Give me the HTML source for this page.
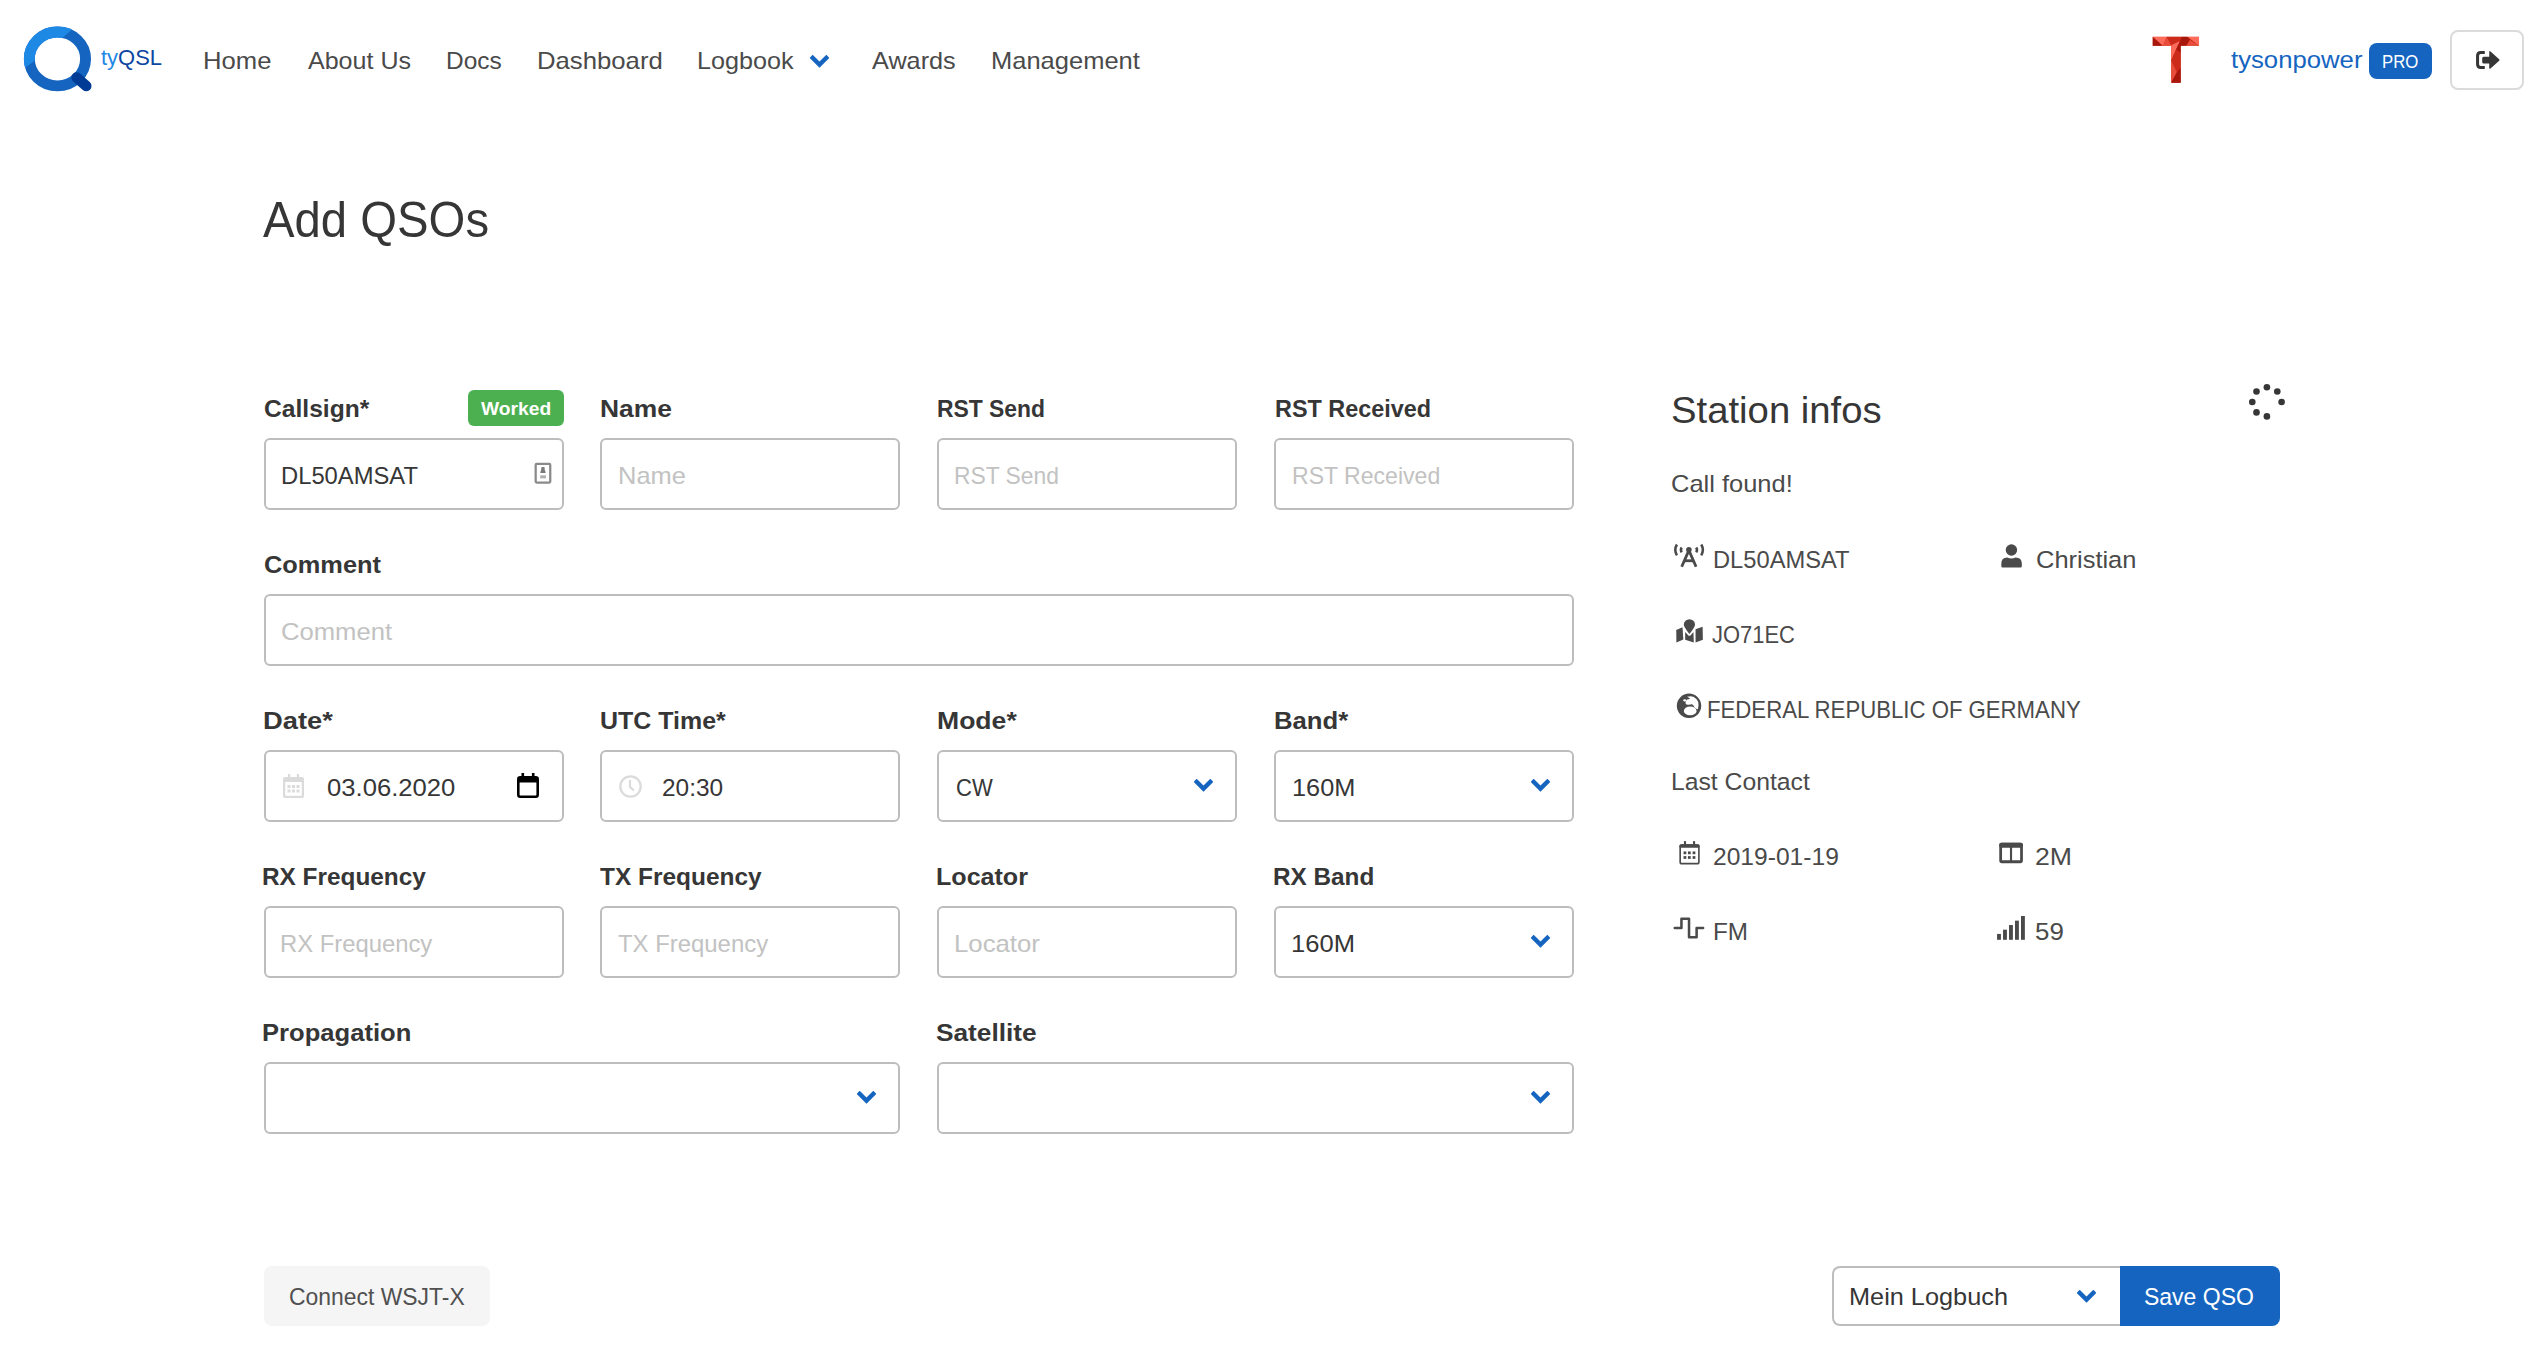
<!DOCTYPE html>
<html><head><meta charset="utf-8"><title>Add QSOs</title>
<style>
html,body{margin:0;padding:0;background:#fff;width:2536px;height:1353px;overflow:hidden;position:relative}
body{font-family:"Liberation Sans",sans-serif}
.b{position:absolute;box-sizing:border-box}
.i{position:absolute;display:block}
.t{position:absolute;white-space:pre;transform-origin:0 0}
</style></head><body>
<svg class="i" style="left:20px;top:22px" width="76" height="74" viewBox="0 0 1390 1353"><defs><clipPath id="lc"><polygon points="1225,-110 572,475 532,530 -255,1070 -255,-110"/></clipPath></defs><ellipse cx="685" cy="675" rx="514" ry="493" fill="none" stroke="#1565c0" stroke-width="200"/><ellipse cx="685" cy="675" rx="514" ry="493" fill="none" stroke="#1e88e5" stroke-width="200" clip-path="url(#lc)"/><line x1="1035" y1="1016" x2="1212" y2="1170" stroke="#003c96" stroke-width="192" stroke-linecap="round"/></svg>
<svg class="i" style="left:810px;top:55.2px" width="19" height="13" viewBox="0 0 19 13"><polyline points="1.15,1.25 9.5,9.6 17.85,1.25" fill="none" stroke="#1565c0" stroke-width="4.3" stroke-linecap="butt" stroke-linejoin="miter"/></svg>
<svg class="i" style="left:2145px;top:30px" width="60" height="60" viewBox="0 0 1353 1353"><rect x="175" y="155" width="1043" height="200" fill="#cc2a1a"/><rect x="592" y="300" width="213" height="890" fill="#cc2a1a"/><polygon points="175,155 175,355 405,355" fill="#a8170c"/><polygon points="175,155 490,155 405,355" fill="#ff6b5b"/><polygon points="490,155 405,355 600,355" fill="#e84c3a"/><polygon points="490,155 835,155 790,250 600,345" fill="#cc2a1a"/><polygon points="835,155 960,155 1010,225 935,355 790,355 790,250" fill="#a8170c"/><polygon points="960,155 1218,155 1218,355" fill="#ff6b5b"/><polygon points="1010,225 1218,355 935,355" fill="#e84c3a"/><polygon points="590,345 790,250 700,440 590,690" fill="#ff6b5b"/><polygon points="790,250 805,355 805,520 700,440" fill="#a8170c"/><polygon points="700,440 805,520 805,850 720,950 590,690" fill="#cc2a1a"/><polygon points="590,690 720,950 590,1190" fill="#e84c3a"/><polygon points="720,950 805,850 805,1190 590,1190" fill="#a8170c"/></svg>
<div class="b" style="left:2369px;top:43px;width:63px;height:36px;background:#1565c0;border-radius:8px"></div>
<div class="b" style="left:2450px;top:30px;width:74px;height:60px;border:2px solid #dbdbdb;border-radius:8px;background:#fff"></div>
<svg class="i" style="left:2446px;top:26px" width="84" height="68" viewBox="0 0 1671 1353"><path d="M772,497 H690 Q598,497 598,590 V760 Q598,855 690,855 H772 V795 H690 Q658,795 658,760 V590 Q658,557 690,557 H772 Z" fill="#363636"/><path d="M720,640 Q720,610 750,610 H860 V515 Q860,490 885,505 L1058,660 Q1075,675 1058,690 L885,845 Q860,860 860,835 V745 H750 Q720,745 720,715 Z" fill="#363636"/></svg>
<div class="b" style="left:264px;top:438px;width:300px;height:72px;border:2px solid #bdbdbd;border-radius:6px"></div>
<div class="b" style="left:600px;top:438px;width:300px;height:72px;border:2px solid #bdbdbd;border-radius:6px"></div>
<div class="b" style="left:937px;top:438px;width:300px;height:72px;border:2px solid #bdbdbd;border-radius:6px"></div>
<div class="b" style="left:1274px;top:438px;width:300px;height:72px;border:2px solid #bdbdbd;border-radius:6px"></div>
<div class="b" style="left:264px;top:594px;width:1310px;height:72px;border:2px solid #bdbdbd;border-radius:6px"></div>
<div class="b" style="left:264px;top:750px;width:300px;height:72px;border:2px solid #bdbdbd;border-radius:6px"></div>
<div class="b" style="left:600px;top:750px;width:300px;height:72px;border:2px solid #bdbdbd;border-radius:6px"></div>
<div class="b" style="left:937px;top:750px;width:300px;height:72px;border:2px solid #bdbdbd;border-radius:6px"></div>
<div class="b" style="left:1274px;top:750px;width:300px;height:72px;border:2px solid #bdbdbd;border-radius:6px"></div>
<div class="b" style="left:264px;top:906px;width:300px;height:72px;border:2px solid #bdbdbd;border-radius:6px"></div>
<div class="b" style="left:600px;top:906px;width:300px;height:72px;border:2px solid #bdbdbd;border-radius:6px"></div>
<div class="b" style="left:937px;top:906px;width:300px;height:72px;border:2px solid #bdbdbd;border-radius:6px"></div>
<div class="b" style="left:1274px;top:906px;width:300px;height:72px;border:2px solid #bdbdbd;border-radius:6px"></div>
<div class="b" style="left:264px;top:1062px;width:636px;height:72px;border:2px solid #bdbdbd;border-radius:6px"></div>
<div class="b" style="left:937px;top:1062px;width:637px;height:72px;border:2px solid #bdbdbd;border-radius:6px"></div>
<div class="b" style="left:468px;top:390px;width:96px;height:36px;background:#4caf50;border-radius:6px"></div>
<svg class="i" style="left:1194px;top:778.5px" width="19" height="13" viewBox="0 0 19 13"><polyline points="1.15,1.25 9.5,9.6 17.85,1.25" fill="none" stroke="#1565c0" stroke-width="4.3" stroke-linecap="butt" stroke-linejoin="miter"/></svg>
<svg class="i" style="left:1531px;top:778.5px" width="19" height="13" viewBox="0 0 19 13"><polyline points="1.15,1.25 9.5,9.6 17.85,1.25" fill="none" stroke="#1565c0" stroke-width="4.3" stroke-linecap="butt" stroke-linejoin="miter"/></svg>
<svg class="i" style="left:1531px;top:934.5px" width="19" height="13" viewBox="0 0 19 13"><polyline points="1.15,1.25 9.5,9.6 17.85,1.25" fill="none" stroke="#1565c0" stroke-width="4.3" stroke-linecap="butt" stroke-linejoin="miter"/></svg>
<svg class="i" style="left:857px;top:1090.5px" width="19" height="13" viewBox="0 0 19 13"><polyline points="1.15,1.25 9.5,9.6 17.85,1.25" fill="none" stroke="#1565c0" stroke-width="4.3" stroke-linecap="butt" stroke-linejoin="miter"/></svg>
<svg class="i" style="left:1531px;top:1090.5px" width="19" height="13" viewBox="0 0 19 13"><polyline points="1.15,1.25 9.5,9.6 17.85,1.25" fill="none" stroke="#1565c0" stroke-width="4.3" stroke-linecap="butt" stroke-linejoin="miter"/></svg>
<svg class="i" style="left:526px;top:456px" width="34" height="34" viewBox="0 0 1353 1353"><rect x="385" y="315" width="580" height="740" rx="40" fill="none" stroke="#8a8a8a" stroke-width="90"/><path d="M610,450 Q675,420 740,450 L745,560 Q790,640 780,680 H570 Q560,640 605,560 Z" fill="#7a7a7a"/><rect x="565" y="770" width="230" height="120" fill="#b0b0b0"/></svg>
<svg class="i" style="left:283px;top:774px" width="21" height="24" viewBox="0 0 21 24"><rect x="0" y="3" width="21" height="21" rx="2" fill="#dbdbdb"/><rect x="5" y="0" width="2.2" height="4" fill="#dbdbdb"/><rect x="13.8" y="0" width="2.2" height="4" fill="#dbdbdb"/><rect x="2.2" y="8" width="16.6" height="13.8" fill="#fff"/><g fill="#dbdbdb"><rect x="4.5" y="11" width="3" height="3"/><rect x="9" y="11" width="3" height="3"/><rect x="13.5" y="11" width="3" height="3"/><rect x="4.5" y="15.5" width="3" height="3"/><rect x="9" y="15.5" width="3" height="3"/><rect x="13.5" y="15.5" width="3" height="3"/></g></svg>
<svg class="i" style="left:516.5px;top:772.5px" width="22" height="25" viewBox="0 0 22 25"><rect x="1.3" y="4.3" width="19.4" height="19.4" rx="2" fill="none" stroke="#000" stroke-width="2.6"/><rect x="1" y="4" width="20" height="5.5" fill="#000"/><rect x="4.5" y="0" width="2.6" height="5" fill="#000"/><rect x="14.9" y="0" width="2.6" height="5" fill="#000"/></svg>
<svg class="i" style="left:618.5px;top:774.5px" width="23" height="23" viewBox="0 0 23 23"><circle cx="11.5" cy="11.5" r="10.2" fill="none" stroke="#dbdbdb" stroke-width="2.3"/><polyline points="11,5 11,12 15,15.5" fill="none" stroke="#dbdbdb" stroke-width="2.2"/></svg>
<svg class="i" style="left:2240px;top:375px" width="50" height="50" viewBox="0 0 50 50"><circle cx="26.90" cy="12.30" r="3.3" fill="#363636"/><circle cx="37.30" cy="16.50" r="3.3" fill="#363636"/><circle cx="41.60" cy="27.00" r="3.3" fill="#363636"/><circle cx="16.50" cy="16.50" r="3.3" fill="#363636"/><circle cx="12.30" cy="27.00" r="3.3" fill="#363636"/><circle cx="16.50" cy="37.40" r="3.3" fill="#363636"/><circle cx="26.90" cy="41.40" r="3.3" fill="#363636"/></svg>
<svg class="i" style="left:1668px;top:538px" width="44" height="36" viewBox="0 0 1654 1353"><g fill="none" stroke="#4a4a4a" stroke-width="95"><path d="M335,245 Q215,445 335,650"/><path d="M1250,245 Q1370,445 1250,650"/><path d="M515,355 Q455,445 515,540"/><path d="M1060,355 Q1120,445 1060,540"/></g><circle cx="785" cy="445" r="105" fill="#4a4a4a"/><g stroke="#4a4a4a" stroke-width="105" fill="none"><line x1="760" y1="520" x2="515" y2="1080"/><line x1="810" y1="520" x2="1055" y2="1080"/><line x1="620" y1="855" x2="950" y2="855"/></g></svg>
<svg class="i" style="left:1994px;top:538px" width="36" height="36" viewBox="0 0 1353 1353"><circle cx="655" cy="450" r="215" fill="#4a4a4a"/><path d="M275,1060 V960 Q275,730 500,730 Q580,770 655,770 Q730,770 810,730 Q1045,730 1045,960 V1060 Q1045,1110 995,1110 H325 Q275,1110 275,1060 Z" fill="#4a4a4a"/></svg>
<svg class="i" style="left:1670px;top:612px" width="40" height="36" viewBox="0 0 1503 1353"><g fill="#4a4a4a"><polygon points="235,680 470,570 500,1030 240,1150"/><polygon points="570,750 700,890 760,890 880,750 895,1150 570,1040"/><polygon points="960,650 1225,555 1235,1040 960,1150"/><path d="M730,270 A210,210 0 0 1 940,480 Q940,560 730,830 Q520,560 520,480 A210,210 0 0 1 730,270 Z"/></g></svg>
<svg class="i" style="left:1670px;top:688px" width="36" height="36" viewBox="0 0 1353 1353"><circle cx="715" cy="670" r="430" fill="#4a4a4a"/><path d="M640,330 Q760,290 880,330 Q1000,390 1060,520 Q1090,640 1050,800 Q980,780 930,740 Q900,660 830,610 Q760,610 700,630 Q600,640 580,560 Q600,460 640,430 Q700,420 760,390 Z" fill="#fff"/><ellipse cx="760" cy="860" rx="240" ry="165" fill="#fff"/><ellipse cx="555" cy="465" rx="55" ry="45" fill="#fff"/><circle cx="715" cy="670" r="430" fill="none" stroke="#4a4a4a" stroke-width="60"/></svg>
<svg class="i" style="left:1674px;top:836px" width="32" height="34" viewBox="0 0 1273 1353"><rect x="245" y="360" width="745" height="740" rx="70" fill="none" stroke="#4a4a4a" stroke-width="65"/><rect x="215" y="330" width="805" height="140" rx="60" fill="#4a4a4a"/><rect x="395" y="205" width="85" height="140" fill="#4a4a4a"/><rect x="755" y="205" width="85" height="140" fill="#4a4a4a"/><g fill="#4a4a4a"><rect x="380" y="615" width="110" height="110"/><rect x="555" y="615" width="110" height="110"/><rect x="740" y="615" width="110" height="110"/><rect x="380" y="800" width="110" height="110"/><rect x="555" y="800" width="110" height="110"/><rect x="740" y="800" width="110" height="110"/></g></svg>
<svg class="i" style="left:1994px;top:836px" width="36" height="34" viewBox="0 0 1433 1353"><rect x="265" y="325" width="830" height="700" rx="50" fill="none" stroke="#4a4a4a" stroke-width="110"/><rect x="210" y="270" width="940" height="200" rx="70" fill="#4a4a4a"/><rect x="635" y="400" width="85" height="640" fill="#4a4a4a"/></svg>
<svg class="i" style="left:1668px;top:910px" width="42" height="36" viewBox="0 0 1578 1353"><polyline points="255,675 505,675 505,330 790,330 790,1025 1075,1025 1075,675 1320,675" fill="none" stroke="#4a4a4a" stroke-width="95" stroke-linecap="round" stroke-linejoin="round"/></svg>
<svg class="i" style="left:1992px;top:910px" width="38" height="36" viewBox="0 0 1428 1353"><g fill="#4a4a4a"><rect x="190" y="900" width="145" height="220"/><rect x="415" y="740" width="145" height="380"/><rect x="640" y="565" width="145" height="555"/><rect x="865" y="400" width="145" height="720"/><rect x="1090" y="225" width="145" height="895"/></g></svg>
<div class="b" style="left:264px;top:1266px;width:226px;height:60px;background:#f5f5f5;border-radius:8px"></div>
<div class="b" style="left:1832px;top:1266px;width:290px;height:60px;border:2px solid #bdbdbd;border-right:none;border-radius:8px 0 0 8px"></div>
<svg class="i" style="left:2077px;top:1290px" width="19" height="13" viewBox="0 0 19 13"><polyline points="1.15,1.25 9.5,9.6 17.85,1.25" fill="none" stroke="#1565c0" stroke-width="4.3" stroke-linecap="butt" stroke-linejoin="miter"/></svg>
<div class="b" style="left:2120px;top:1266px;width:160px;height:60px;background:#1565c0;border-radius:0 8px 8px 0"></div>
<div class="t" style="left:100.61px;top:48px;font-size:21.5px;line-height:21.5px;font-weight:400;color:#0d47a1;transform:scaleX(1.0209);"><span style="color:#1e88e5">ty</span><span style="color:#0d47a1">QSL</span></div>
<div class="t" style="left:203.49px;top:49px;font-size:24px;line-height:24px;font-weight:400;color:#4a4a4a;transform:scaleX(1.0686);">Home</div>
<div class="t" style="left:307.67px;top:49px;font-size:24px;line-height:24px;font-weight:400;color:#4a4a4a;transform:scaleX(1.0431);">About Us</div>
<div class="t" style="left:445.58px;top:49px;font-size:24px;line-height:24px;font-weight:400;color:#4a4a4a;transform:scaleX(1.0197);">Docs</div>
<div class="t" style="left:536.73px;top:49px;font-size:24px;line-height:24px;font-weight:400;color:#4a4a4a;transform:scaleX(1.0709);">Dashboard</div>
<div class="t" style="left:696.78px;top:49px;font-size:24px;line-height:24px;font-weight:400;color:#4a4a4a;transform:scaleX(1.0491);">Logbook</div>
<div class="t" style="left:871.77px;top:49px;font-size:24px;line-height:24px;font-weight:400;color:#4a4a4a;transform:scaleX(1.0517);">Awards</div>
<div class="t" style="left:990.70px;top:49px;font-size:24px;line-height:24px;font-weight:400;color:#4a4a4a;transform:scaleX(1.0625);">Management</div>
<div class="t" style="left:2230.66px;top:48px;font-size:24px;line-height:24px;font-weight:400;color:#1565c0;transform:scaleX(1.0710);">tysonpower</div>
<div class="t" style="left:2382.30px;top:53px;font-size:18.5px;line-height:18.5px;font-weight:400;color:#ffffff;transform:scaleX(0.9075);">PRO</div>
<div class="t" style="left:263.20px;top:195px;font-size:49.42px;line-height:49.42px;font-weight:400;color:#363636;transform:scaleX(0.9571);">Add QSOs</div>
<div class="t" style="left:263.77px;top:397px;font-size:24px;line-height:24px;font-weight:700;color:#363636;transform:scaleX(1.0258);">Callsign*</div>
<div class="t" style="left:600.21px;top:397px;font-size:24px;line-height:24px;font-weight:700;color:#363636;transform:scaleX(1.0999);">Name</div>
<div class="t" style="left:937.20px;top:397px;font-size:24px;line-height:24px;font-weight:700;color:#363636;transform:scaleX(0.9530);">RST Send</div>
<div class="t" style="left:1274.66px;top:397px;font-size:24px;line-height:24px;font-weight:700;color:#363636;transform:scaleX(0.9745);">RST Received</div>
<div class="t" style="left:263.79px;top:553px;font-size:24px;line-height:24px;font-weight:700;color:#363636;transform:scaleX(1.0568);">Comment</div>
<div class="t" style="left:262.84px;top:709px;font-size:24px;line-height:24px;font-weight:700;color:#363636;transform:scaleX(1.1380);">Date*</div>
<div class="t" style="left:599.87px;top:709px;font-size:24px;line-height:24px;font-weight:700;color:#363636;transform:scaleX(1.0400);">UTC Time*</div>
<div class="t" style="left:936.99px;top:709px;font-size:24px;line-height:24px;font-weight:700;color:#363636;transform:scaleX(1.1073);">Mode*</div>
<div class="t" style="left:1274.25px;top:709px;font-size:24px;line-height:24px;font-weight:700;color:#363636;transform:scaleX(1.0714);">Band*</div>
<div class="t" style="left:262.34px;top:865px;font-size:24px;line-height:24px;font-weight:700;color:#363636;transform:scaleX(1.0152);">RX Frequency</div>
<div class="t" style="left:600.27px;top:865px;font-size:24px;line-height:24px;font-weight:700;color:#363636;transform:scaleX(1.0186);">TX Frequency</div>
<div class="t" style="left:936.30px;top:865px;font-size:24px;line-height:24px;font-weight:700;color:#363636;transform:scaleX(1.0447);">Locator</div>
<div class="t" style="left:1273.35px;top:865px;font-size:24px;line-height:24px;font-weight:700;color:#363636;transform:scaleX(1.0128);">RX Band</div>
<div class="t" style="left:262.26px;top:1021px;font-size:24px;line-height:24px;font-weight:700;color:#363636;transform:scaleX(1.0667);">Propagation</div>
<div class="t" style="left:936.03px;top:1021px;font-size:24px;line-height:24px;font-weight:700;color:#363636;transform:scaleX(1.0942);">Satellite</div>
<div class="t" style="left:481.02px;top:400px;font-size:18.5px;line-height:18.5px;font-weight:700;color:#ffffff;transform:scaleX(1.0390);">Worked</div>
<div class="t" style="left:280.64px;top:464px;font-size:24px;line-height:24px;font-weight:400;color:#363636;transform:scaleX(0.9905);">DL50AMSAT</div>
<div class="t" style="left:618.00px;top:464px;font-size:24px;line-height:24px;font-weight:400;color:#c2c2c2;transform:scaleX(1.0605);">Name</div>
<div class="t" style="left:954.46px;top:464px;font-size:24px;line-height:24px;font-weight:400;color:#c2c2c2;transform:scaleX(0.9517);">RST Send</div>
<div class="t" style="left:1291.94px;top:464px;font-size:24px;line-height:24px;font-weight:400;color:#c2c2c2;transform:scaleX(0.9608);">RST Received</div>
<div class="t" style="left:281.37px;top:620px;font-size:24px;line-height:24px;font-weight:400;color:#c2c2c2;transform:scaleX(1.0670);">Comment</div>
<div class="t" style="left:326.59px;top:776px;font-size:24px;line-height:24px;font-weight:400;color:#363636;transform:scaleX(1.0682);">03.06.2020</div>
<div class="t" style="left:661.69px;top:776px;font-size:24px;line-height:24px;font-weight:400;color:#363636;transform:scaleX(1.0174);">20:30</div>
<div class="t" style="left:955.56px;top:776px;font-size:24px;line-height:24px;font-weight:400;color:#363636;transform:scaleX(0.9172);">CW</div>
<div class="t" style="left:1292.11px;top:776px;font-size:24px;line-height:24px;font-weight:400;color:#363636;transform:scaleX(1.0551);">160M</div>
<div class="t" style="left:280.13px;top:932px;font-size:24px;line-height:24px;font-weight:400;color:#c2c2c2;transform:scaleX(0.9927);">RX Frequency</div>
<div class="t" style="left:617.83px;top:932px;font-size:24px;line-height:24px;font-weight:400;color:#c2c2c2;transform:scaleX(0.9958);">TX Frequency</div>
<div class="t" style="left:953.98px;top:932px;font-size:24px;line-height:24px;font-weight:400;color:#c2c2c2;transform:scaleX(1.0735);">Locator</div>
<div class="t" style="left:1291.49px;top:932px;font-size:24px;line-height:24px;font-weight:400;color:#363636;transform:scaleX(1.0658);">160M</div>
<div class="t" style="left:1670.55px;top:392px;font-size:37px;line-height:37px;font-weight:400;color:#363636;transform:scaleX(1.0346);">Station infos</div>
<div class="t" style="left:1671.12px;top:472px;font-size:24px;line-height:24px;font-weight:400;color:#4a4a4a;transform:scaleX(1.0607);">Call found!</div>
<div class="t" style="left:1713.16px;top:548px;font-size:24.5px;line-height:24.5px;font-weight:400;color:#4a4a4a;transform:scaleX(0.9671);">DL50AMSAT</div>
<div class="t" style="left:2035.62px;top:548px;font-size:24.5px;line-height:24.5px;font-weight:400;color:#4a4a4a;transform:scaleX(1.0388);">Christian</div>
<div class="t" style="left:1711.91px;top:623px;font-size:24.5px;line-height:24.5px;font-weight:400;color:#4a4a4a;transform:scaleX(0.8950);">JO71EC</div>
<div class="t" style="left:1707.03px;top:698px;font-size:24.5px;line-height:24.5px;font-weight:400;color:#4a4a4a;transform:scaleX(0.9049);">FEDERAL REPUBLIC OF GERMANY</div>
<div class="t" style="left:1670.58px;top:770px;font-size:24.5px;line-height:24.5px;font-weight:400;color:#4a4a4a;transform:scaleX(1.0094);">Last Contact</div>
<div class="t" style="left:1713.20px;top:845px;font-size:24.5px;line-height:24.5px;font-weight:400;color:#4a4a4a;transform:scaleX(1.0039);">2019-01-19</div>
<div class="t" style="left:2034.84px;top:845px;font-size:24.5px;line-height:24.5px;font-weight:400;color:#4a4a4a;transform:scaleX(1.0890);">2M</div>
<div class="t" style="left:1713.10px;top:920px;font-size:24px;line-height:24px;font-weight:400;color:#4a4a4a;transform:scaleX(1.0104);">FM</div>
<div class="t" style="left:2034.96px;top:920px;font-size:24px;line-height:24px;font-weight:400;color:#4a4a4a;transform:scaleX(1.0784);">59</div>
<div class="t" style="left:288.76px;top:1285px;font-size:24.5px;line-height:24.5px;font-weight:400;color:#505050;transform:scaleX(0.9349);">Connect WSJT-X</div>
<div class="t" style="left:1849.03px;top:1285px;font-size:24.5px;line-height:24.5px;font-weight:400;color:#363636;transform:scaleX(1.0327);">Mein Logbuch</div>
<div class="t" style="left:2144.28px;top:1285px;font-size:24.5px;line-height:24.5px;font-weight:400;color:#ffffff;transform:scaleX(0.9381);">Save QSO</div>
</body></html>
